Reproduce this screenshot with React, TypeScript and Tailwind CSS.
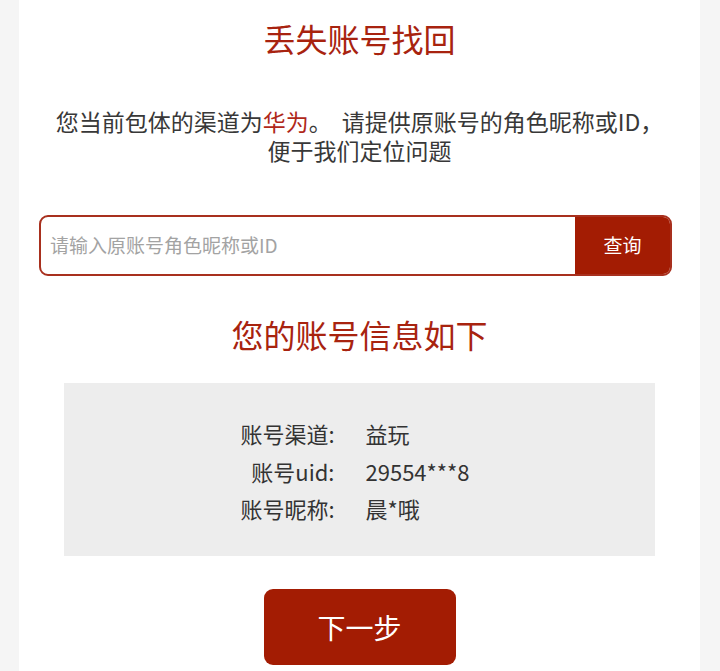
import React from 'react'

const FONT = "font-['Noto_Sans_CJK_SC','Noto_Sans',sans-serif]"

function InfoRow({ label, value }: { label: string; value: string }) {
  return (
    <>
      <span className="text-right">{label}</span>
      <span>{value}</span>
    </>
  )
}

export default function App() {
  return (
    <div className={`${FONT} min-h-[671px] w-full bg-[#f5f5f5] flex justify-center`}>
      <div className="w-[681px] ml-[-1px] bg-white flex flex-col items-center pt-[18px] pb-[20px]">
        {/* Header */}
        <h1 className="text-[32px] leading-[40px] text-[#a8230f]">丢失账号找回</h1>

        <p className="mt-[49px] text-[23px] leading-[29px] text-[#383838] text-center">
          您当前包体的渠道为<span className="text-[#b0281a]">华为</span>。<span className="inline-block w-[10px]" />请提供原账号的角色昵称或ID，
          <br />
          便于我们定位问题
        </p>

        {/* Search */}
        <div className="mt-[50px] w-[633px] h-[61px] ml-[-8px] flex rounded-[9px] border-2 border-[#a8301e] overflow-hidden">
          <div className="flex-1 flex items-center pl-[9px] text-[19px] text-[#a3a3a3]">请输入原账号角色昵称或ID</div>
          <button className="w-[95px] h-full bg-[#a31c03] text-white text-[19px] flex items-center justify-center">查询</button>
        </div>

        <h2 className="mt-[38px] text-[32px] leading-[40px] text-[#a8230f]">您的账号信息如下</h2>

        {/* Account info */}
        <div className="mt-[29px] w-[591px] h-[173px] ml-[-1px] bg-[#ededed] pt-[32px]">
          <div className="grid grid-cols-[271px_1fr] gap-x-[31px] text-[22px] leading-[37.5px] text-[#333]">
            <InfoRow label="账号渠道:" value="益玩" />
            <InfoRow label="账号uid:" value="29554***8" />
            <InfoRow label="账号昵称:" value="晨*哦" />
          </div>
        </div>

        <button className="mt-[33px] w-[192px] h-[76px] rounded-[9px] bg-[#a31c03] text-white text-[28px] flex items-center justify-center">
          下一步
        </button>
      </div>
    </div>
  )
}
